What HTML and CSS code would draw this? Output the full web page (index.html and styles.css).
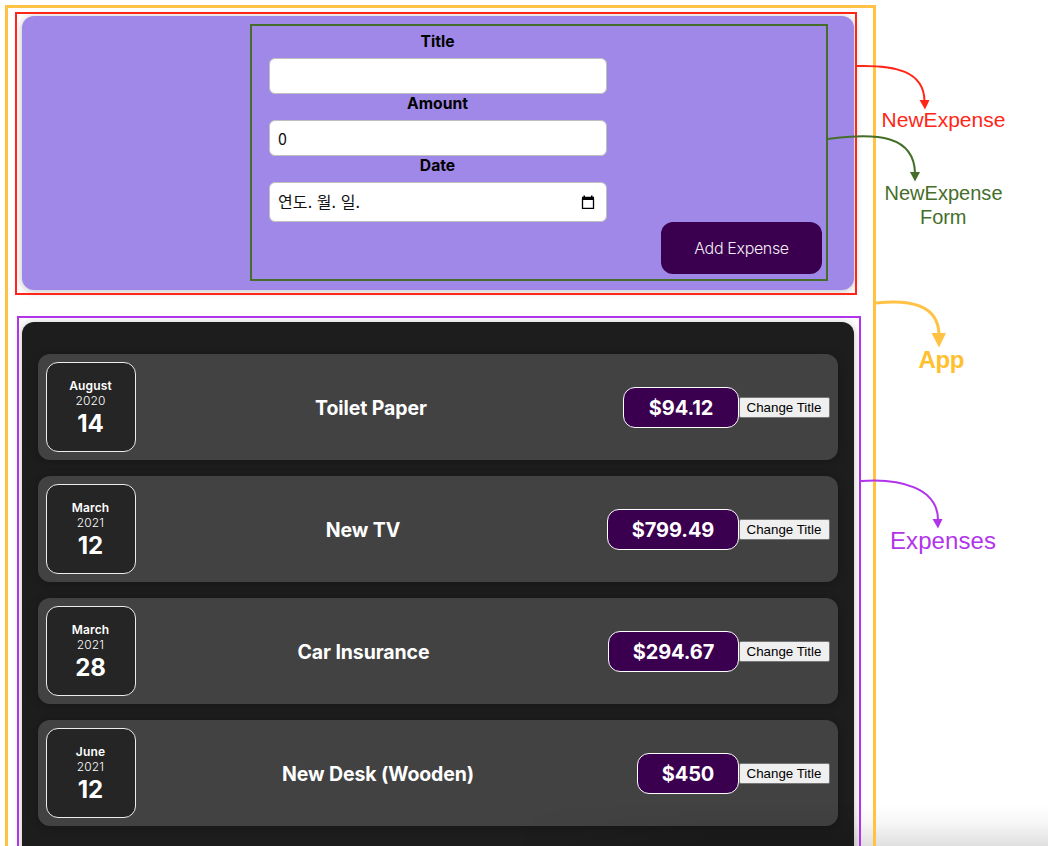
FILE: index.html
```html
<!DOCTYPE html>
<html lang="ko">
<head>
<meta charset="utf-8">
<title>Expense components</title>
<link rel="stylesheet" href="styles.css">
</head>
<body>
<main class="app">
  <section class="new-expense">
    <form class="expense-form">
      <div class="control"><label>Title</label><div class="field"></div></div>
      <div class="control"><label>Amount</label><div class="field">0</div></div>
      <div class="control"><label>Date</label><div class="field field-date"><span>연도. 월. 일.</span>
        <svg class="calendar" width="14" height="15" viewBox="0 0 14 15"><path d="M1.5 3v10.3h11V3" fill="none" stroke="#000" stroke-width="1.3"/><path d="M1 1.7h12V5H1zM2.5 .5H4v2H2.5zM10 .5h1.500v2H10z"/></svg>
      </div></div>
      <button type="button" class="add">Add Expense</button>
    </form>
  </section>
  <section class="expenses">
    <article class="item">
      <div class="date"><span class="month">August</span><span class="year">2020</span><span class="day">14</span></div>
      <h2 class="title">Toilet Paper</h2><div class="price p1">$94.12</div><button type="button" class="change">Change Title</button>
    </article>
    <article class="item">
      <div class="date"><span class="month">March</span><span class="year">2021</span><span class="day">12</span></div>
      <h2 class="title">New TV</h2><div class="price p2">$799.49</div><button type="button" class="change">Change Title</button>
    </article>
    <article class="item">
      <div class="date"><span class="month">March</span><span class="year">2021</span><span class="day">28</span></div>
      <h2 class="title">Car Insurance</h2><div class="price p3">$294.67</div><button type="button" class="change">Change Title</button>
    </article>
    <article class="item">
      <div class="date"><span class="month">June</span><span class="year">2021</span><span class="day">12</span></div>
      <h2 class="title">New Desk (Wooden)</h2><div class="price p4">$450</div><button type="button" class="change">Change Title</button>
    </article>
  </section>
</main>
<div class="shade"></div>
<svg class="notes" width="1048" height="846" viewBox="0 0 1048 846">
  <g fill="none">
    <path d="M6.500 900V6.500H874.500V900" stroke="#ffc244" stroke-width="3"/>
    <rect x="16" y="13" width="840" height="281" stroke="#ff2617" stroke-width="2"/>
    <rect x="251" y="25" width="576" height="255" stroke="#456e29" stroke-width="2"/>
    <path d="M18 900V317H860V900" stroke="#b234ea" stroke-width="2"/>
    <path d="M857 66C895 65 924 71 924.500 101" stroke="#ff2617" stroke-width="2"/>
    <path d="M828 139C878 132 914 136 915 173" stroke="#456e29" stroke-width="2"/>
    <path d="M876 303C910 299 938 305 939 334" stroke="#ffc244" stroke-width="3"/>
    <path d="M861 481C900 478 938 488 938 520" stroke="#b234ea" stroke-width="2"/>
  </g>
  <path d="M919.500 100H929.500L925 109.500Z" fill="#ff2617"/>
  <path d="M910 172H920L915 181.500Z" fill="#456e29"/>
  <path d="M931.500 333H946L939 347.500Z" fill="#ffc244"/>
  <path d="M932.500 519H942.500L938 528.500Z" fill="#b234ea"/>
  <g class="note-text">
    <text x="881.500" y="127" font-size="21" textLength="124" fill="#ff2617">NewExpense</text>
    <text x="884.500" y="200" font-size="20" textLength="118" fill="#456e29">NewExpense</text>
    <text x="920" y="224" font-size="20" textLength="46.500" fill="#456e29">Form</text>
    <text x="918.500" y="368" font-size="24" font-weight="700" textLength="46" fill="#ffc030">App</text>
    <text x="890" y="549" font-size="24" textLength="106" fill="#b234ea">Expenses</text>
  </g>
</svg>
</body>
</html>
```
FILE: styles.css
```css
* { box-sizing: border-box; }
body { margin: 0; width: 1048px; height: 846px; overflow: hidden; position: relative; background: #fff; font-family: Inter, "Noto Sans CJK KR", sans-serif; }
.app { width: 832px; margin: 16px 0 0 22px; display: flex; flex-direction: column; gap: 32px; }
.new-expense { height: 274px; flex: none; border-radius: 12px; background: #a088e8; box-shadow: 0 1px 8px rgba(0,0,0,.25); padding: 16px 32px 16px 247px; }
.expense-form { display: flex; flex-direction: column; }
.control { width: 338px; }
.control label { display: block; height: 18px; line-height: 20px; margin-bottom: 8px; padding-right: 1px; text-align: center; font-weight: 700; font-size: 15.7px; color: #000; }
.field { height: 36px; border: 1px solid #bfbfbf; border-radius: 6px; background: #fff; padding: 0 8px; font-family: "Noto Sans CJK KR", sans-serif; font-size: 16px; line-height: 34px; color: #111; }
.field-date { height: 40px; display: flex; align-items: center; justify-content: space-between; padding-right: 11px; }
.field-date span { padding-bottom: 2px; letter-spacing: .1px; }
.calendar { flex: none; }
.add { align-self: flex-end; width: 161px; height: 52px; border: 0; border-radius: 12px; background: #3a004f; color: #f2edf5; font: 300 16px Inter, sans-serif; letter-spacing: -.35px; padding: 0; }
.expenses { height: 560px; flex: none; border-radius: 12px; background: #1d1d1d; box-shadow: 0 1px 8px rgba(0,0,0,.25); padding: 32px 16px; display: flex; flex-direction: column; gap: 16px; }
.item { height: 106px; flex: none; display: flex; align-items: center; padding: 8px; border-radius: 12px; background: #424242; box-shadow: 0 1px 8px rgba(0,0,0,.25); }
.date { width: 90px; height: 90px; padding-right: 1px; display: flex; flex-direction: column; align-items: center; justify-content: center; border: 1px solid #ececec; border-radius: 12px; background: #252525; color: #fff; }
.month { font-size: 12px; line-height: 15px; font-weight: 600; letter-spacing: .15px; }
.year { font-size: 12px; line-height: 15px; font-weight: 300; letter-spacing: .1px; }
.day { font-size: 24px; line-height: 29px; font-weight: 650; padding-top: 1px; margin-bottom: -1px; }
.title { flex: 1; margin: 0 33px 0 16px; padding-top: 2px; text-align: center; color: #fff; font-size: 19.5px; line-height: 24px; font-weight: 650; letter-spacing: -.1px; }
.price { height: 41px; border: 1px solid #fff; border-radius: 12px; background: #3a004f; color: #fff; text-align: center; font-weight: 650; font-size: 20px; line-height: 41px; letter-spacing: -.1px; }
.p1 { width: 116px; } .p2 { width: 132px; } .p3 { width: 131px; } .p4 { width: 102px; }
.change { width: 91px; height: 21px; padding: 1px 1px 0 0; border: 1px solid #767676; border-radius: 2px; background: #efefef; color: #000; font: 13.333px "Liberation Sans", sans-serif; line-height: 18px; white-space: nowrap; }
.shade { position: absolute; left: 520px; top: 804px; width: 528px; height: 42px; background: linear-gradient(to bottom, transparent, rgba(0,0,0,.03) 45%, rgba(0,0,0,.12)); -webkit-mask-image: linear-gradient(to right, transparent, #000 35%); mask-image: linear-gradient(to right, transparent, #000 35%); }
.notes { position: absolute; left: 0; top: 0; }
.note-text { font-family: "Liberation Sans", Arial, sans-serif; }
```
